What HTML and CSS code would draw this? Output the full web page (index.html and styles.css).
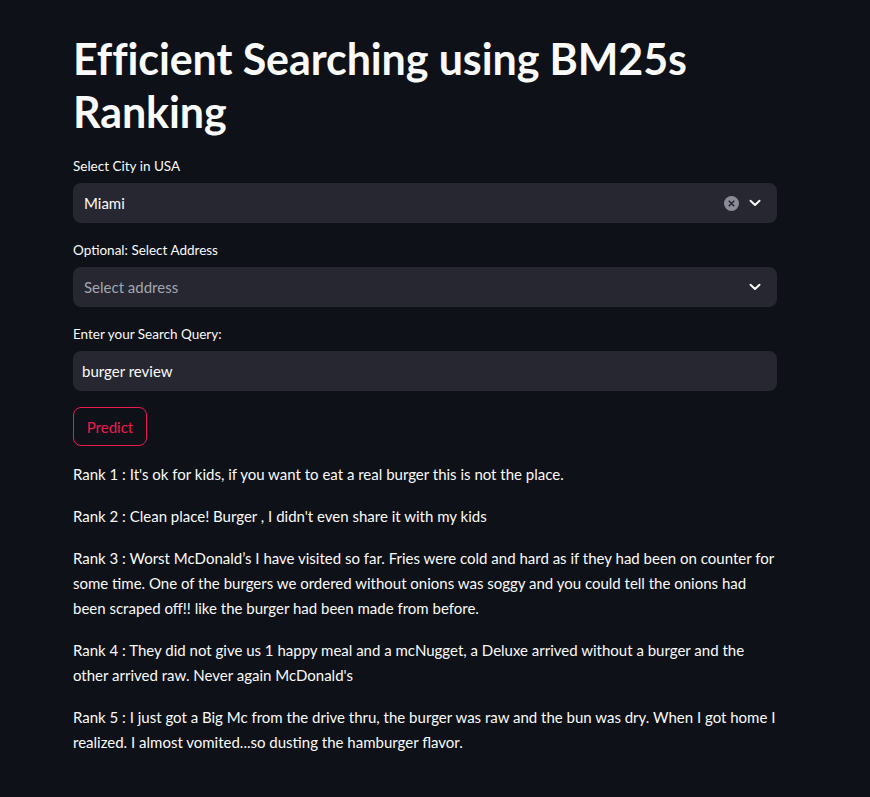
FILE: index.html
```html
<!DOCTYPE html>
<html lang="en">
<head>
<meta charset="utf-8">
<title>Efficient Searching using BM25s Ranking</title>
<link rel="stylesheet" href="styles.css">
</head>
<body>
<main class="main">
  <h1 class="title">Efficient Searching using BM25s Ranking</h1>

  <div class="field">
    <label class="label">Select City in USA</label>
    <div class="select">
      <span class="select-value">Miami</span>
      <span class="select-icons">
        <svg class="clear" width="15" height="15" viewBox="0 0 15 15"><circle cx="7.5" cy="7.5" r="7.5" fill="#8b8b98"/><path d="M5.2 5.2l4.6 4.6M9.8 5.2l-4.6 4.6" stroke="#262730" stroke-width="1.6" stroke-linecap="round"/></svg>
        <svg class="chev" width="12" height="8" viewBox="0 0 12 8"><path d="M1.5 1.8L6 6l4.5-4.2" fill="none" stroke="#fafafa" stroke-width="2" stroke-linecap="round" stroke-linejoin="round"/></svg>
      </span>
    </div>
  </div>

  <div class="field">
    <label class="label">Optional: Select Address</label>
    <div class="select">
      <span class="select-placeholder">Select address</span>
      <span class="select-icons">
        <svg class="chev" width="12" height="8" viewBox="0 0 12 8"><path d="M1.5 1.8L6 6l4.5-4.2" fill="none" stroke="#fafafa" stroke-width="2" stroke-linecap="round" stroke-linejoin="round"/></svg>
      </span>
    </div>
  </div>

  <div class="field">
    <label class="label">Enter your Search Query:</label>
    <div class="input"><span>burger review</span></div>
  </div>

  <button class="btn">Predict</button>

  <div class="results">
    <p>Rank 1 : It's ok for kids, if you want to eat a real burger this is not the place.</p>
    <p>Rank 2 : Clean place! Burger , I didn't even share it with my kids</p>
    <p>Rank 3 : Worst McDonald’s I have visited so far. Fries were cold and hard as if they had been on counter for some time. One of the burgers we ordered without onions was soggy and you could tell the onions had been scraped off!! like the burger had been made from before.</p>
    <p>Rank 4 : They did not give us 1 happy meal and a mcNugget, a Deluxe arrived without a burger and the other arrived raw. Never again McDonald's</p>
    <p>Rank 5 : I just got a Big Mc from the drive thru, the burger was raw and the bun was dry. When I got home I realized. I almost vomited...so dusting the hamburger flavor.</p>
  </div>
</main>
</body>
</html>
```
FILE: styles.css
```css
html, body {
  margin: 0;
  padding: 0;
  background: #0e1117;
  color: #fafafa;
  font-family: "Lato", "Open Sans", sans-serif;
}
.main {
  width: 704px;
  margin: 0 0 0 73px;
  padding-top: 32px;
  padding-bottom: 30px;
}
.title {
  font-size: 43px;
  font-weight: 700;
  line-height: 53px;
  margin: 0 0 18px 0;
  letter-spacing: -0.1px;
}
.field {
  margin-bottom: 17px;
}
.label {
  display: block;
  font-size: 13.5px;
  line-height: 21px;
  height: 21px;
  margin-bottom: 6px;
  color: #fafafa;
}
.select, .input {
  height: 40px;
  background: #262730;
  border-radius: 8px;
  display: flex;
  align-items: center;
  box-sizing: border-box;
  font-size: 15px;
}
.select {
  padding: 0 16px 0 11px;
  justify-content: space-between;
}
.input {
  padding: 0 9px;
}
.select-placeholder {
  color: #a3a6b0;
}
.select-icons {
  display: flex;
  align-items: center;
  gap: 10px;
}
.clear, .chev {
  display: block;
}
.btn {
  margin-top: -1px;
  width: 74px;
  height: 39px;
  background: #0e1117;
  border: 1px solid #ee1a4d;
  color: #ee1a4d;
  border-radius: 8px;
  font-family: inherit;
  font-size: 15px;
  padding: 0;
  cursor: pointer;
}
.results {
  margin-top: 16px;
  font-size: 15px;
  line-height: 25px;
}
.results p {
  margin: 0 0 17px 0;
}
```
